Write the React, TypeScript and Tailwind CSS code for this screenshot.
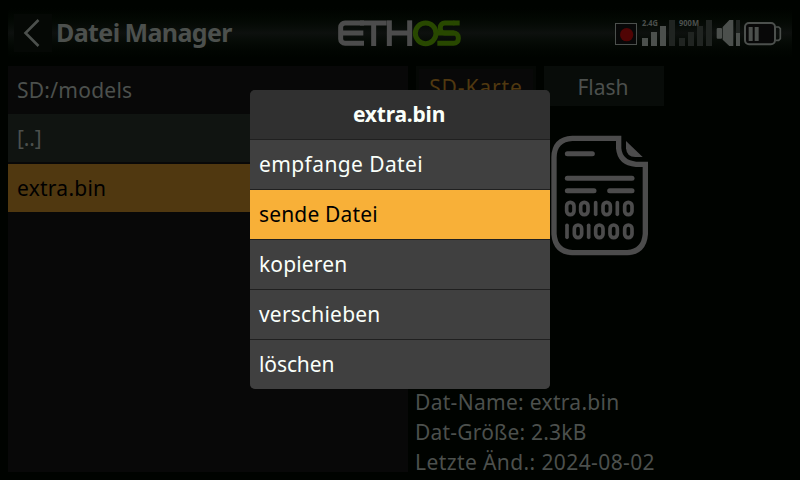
const rows = [
  { label: 'empfange Datei', cls: 'bg-[#404040] text-[#fafffa] tracking-[0.4px]' },
  { label: 'sende Datei', cls: 'bg-[#f8b038] text-black tracking-[0.15px]' },
  { label: 'kopieren', cls: 'bg-[#404040] text-[#fafffa] tracking-[0.15px]' },
  { label: 'verschieben', cls: 'bg-[#404040] text-[#fafffa] tracking-[0.2px]' },
  { label: 'löschen', cls: 'bg-[#404040] text-[#fafffa] tracking-[-0.1px]' },
];

function Logo() {
  return (
    <svg className="h-[60px] w-[160px] shrink-0" viewBox="0 0 480 180" fill="none" strokeWidth="15">
      <g stroke="#4c4c4c">
        <svg x="50" y="40" width="82" height="90" viewBox="50 40 82 90">
          <rect x="62" y="54" width="120" height="61" rx="13" />
        </svg>
        <line x1="62" y1="84" x2="130" y2="84" />
        <line x1="120" y1="54" x2="200" y2="54" />
        <line x1="161" y1="54" x2="161" y2="123" />
        <line x1="208" y1="46" x2="208" y2="123" />
        <line x1="269" y1="46" x2="269" y2="123" />
        <line x1="208" y1="84" x2="269" y2="84" />
      </g>
      <g stroke="#284800">
        <circle cx="317" cy="85" r="31" />
        <svg x="345" y="40" width="58" height="60" viewBox="345 40 58 60">
          <rect x="361" y="54" width="90" height="30" rx="13" />
        </svg>
        <line x1="400" y1="54" x2="419" y2="54" />
        <svg x="352" y="70" width="75" height="60" viewBox="352 70 75 60">
          <rect x="300" y="84" width="115" height="31" rx="14" />
        </svg>
      </g>
    </svg>
  );
}

function Status() {
  return (
    <svg className="h-[60px] w-[192px] shrink-0" viewBox="0 0 576 180" fill="#4c504d">
      <rect x="46.500" y="55.500" width="63" height="63" fill="#080808" stroke="#4c504d" strokeWidth="3" />
      <circle cx="80" cy="89" r="20" fill="#500404" />
      <rect x="126" y="99" width="18" height="24" />
      <rect x="153" y="81" width="18" height="42" />
      <rect x="180" y="63" width="18" height="60" />
      <g fill="#202421">
        <rect x="207" y="45" width="18" height="78" />
        <rect x="237" y="99" width="18" height="24" />
        <rect x="264" y="81" width="18" height="42" />
        <rect x="291" y="63" width="18" height="60" />
        <rect x="318" y="45" width="18" height="78" />
        <rect x="408" y="45" width="12" height="39" />
      </g>
      <text x="126" y="63" fontSize="24" fontWeight="700" textLength="48" lengthAdjust="spacingAndGlyphs">2.4G</text>
      <text x="237" y="63" fontSize="24" fontWeight="700" textLength="60" lengthAdjust="spacingAndGlyphs">900M</text>
      <rect x="350" y="69" width="16" height="32" rx="3" />
      <path d="M368 66L388 45H400V123H388L368 104Z" />
      <rect x="408" y="84" width="12" height="39" />
      <rect x="435" y="54" width="90" height="64" rx="12" fill="#080808" stroke="#4c504d" strokeWidth="6" />
      <path d="M527 66H536L541 71V101L536 106H527" fill="none" stroke="#4c504d" strokeWidth="5" />
      <rect x="446" y="66" width="12" height="42" />
      <rect x="464" y="66" width="12" height="42" />
    </svg>
  );
}

function BinaryFile() {
  const zerosTop = [80, 122, 189, 254];
  const zerosBottom = [103, 167, 210, 254];
  return (
    <svg className="h-[140px] w-[120px]" viewBox="0 0 360 420" fill="none" stroke="#4c4c4c">
      <path strokeWidth="16" d="M236 40H97Q43 43 42 97V327Q46 380 97 383H262Q312 380 316 327V118H288Q240 114 236 70Z" />
      <path d="M258 48L308 96H286Q260 96 258 70Z" fill="#4c4c4c" stroke="none" />
      <g strokeWidth="15" strokeLinecap="round">
        <line x1="82" y1="86" x2="157" y2="86" />
        <line x1="82" y1="160" x2="276" y2="160" />
        <line x1="82" y1="197" x2="162" y2="197" />
        <line x1="209" y1="197" x2="276" y2="197" />
      </g>
      <g strokeWidth="11" strokeLinecap="round">
        {zerosTop.map((x) => <rect key={x} x={x} y="232" width="22" height="37" rx="11" />)}
        {zerosBottom.map((x) => <rect key={x} x={x} y="300" width="22" height="38" rx="11" />)}
        <line x1="167" y1="233" x2="167" y2="268" />
        <line x1="232" y1="233" x2="232" y2="268" />
        <line x1="81" y1="301" x2="81" y2="337" />
        <line x1="146" y1="301" x2="146" y2="337" />
      </g>
    </svg>
  );
}

export default function App() {
  return (
    <div className="relative h-[480px] w-[800px] overflow-hidden whitespace-pre bg-[#000300] px-2 pt-2 font-['Noto_Sans',sans-serif] text-[21px] text-[#4c504d]">
      <header className="flex h-[50px] items-start bg-linear-to-b from-[#000300] via-[#0d100e] to-[#000300]">
        <div className="ml-1.5 mt-1.5 flex h-[38px] w-[38px] shrink-0 items-center justify-center bg-[#050805]">
          <svg className="h-[38px] w-[38px]" viewBox="0 0 38 38" fill="none" stroke="#4c504d" strokeWidth="2.600">
            <path d="M24.500 6L11.500 19L24.500 32" />
          </svg>
        </div>
        <h1 className="ml-1 w-[264px] shrink-0 text-[25px] font-bold leading-[48px] tracking-[-0.6px] [word-spacing:-1px]"><span>Datei Manager</span></h1>
        <div className="-mt-[3px] flex">
          <Logo />
          <div className="w-[120px] shrink-0" />
          <Status />
        </div>
      </header>
      <div className="mt-2 flex">
        <section className="h-[406px] w-[400px] bg-[#080808] leading-[48px]">
          <div className="h-12 pl-[9px]"><span className="tracking-[0.25px]">SD:/models</span></div>
          <div className="h-12 bg-[#101411] pl-[9px]"><span className="tracking-[-0.1px]">[..]</span></div>
          <div className="mt-0.5 h-12 bg-[#503810] pl-[9px] text-black"><span className="tracking-[0.25px]">extra.bin</span></div>
        </section>
        <section className="ml-2 w-[376px]">
          <div className="flex gap-2 text-center leading-[42px]">
            <div className="h-10 w-[120px] border-[3px] border-[#050805] bg-[#080808] leading-[36px] text-[#503810]"><span className="tracking-[0.9px]">SD-Karte</span></div>
            <div className="h-10 w-[120px] bg-[#080c09] pr-0.5"><span>Flash</span></div>
          </div>
          <div className="ml-[124px] mt-[19px] h-[140px]"><BinaryFile /></div>
          <div className="-ml-px mt-[122px] leading-[30px]">
            <p><span className="tracking-[0.3px]">Dat-Name: extra.bin</span></p>
            <p><span className="tracking-[0.2px]">Dat-Größe: 2.3kB</span></p>
            <p><span className="tracking-[0.4px]">Letzte Änd.: 2024-08-02</span></p>
          </div>
        </section>
      </div>
      <div className="absolute left-[250px] top-[90px] w-[300px] overflow-hidden rounded-[5px] bg-[#202020] leading-[48px]">
        <div className="h-[49px] bg-[#303030] pr-0.5 text-center font-bold tracking-[-0.2px] text-[#fafffa]"><span>extra.bin</span></div>
        {rows.map((r) => (
          <div key={r.label} className={`mt-px h-[49px] pl-[9px] ${r.cls}`}><span>{r.label}</span></div>
        ))}
      </div>
    </div>
  );
}
